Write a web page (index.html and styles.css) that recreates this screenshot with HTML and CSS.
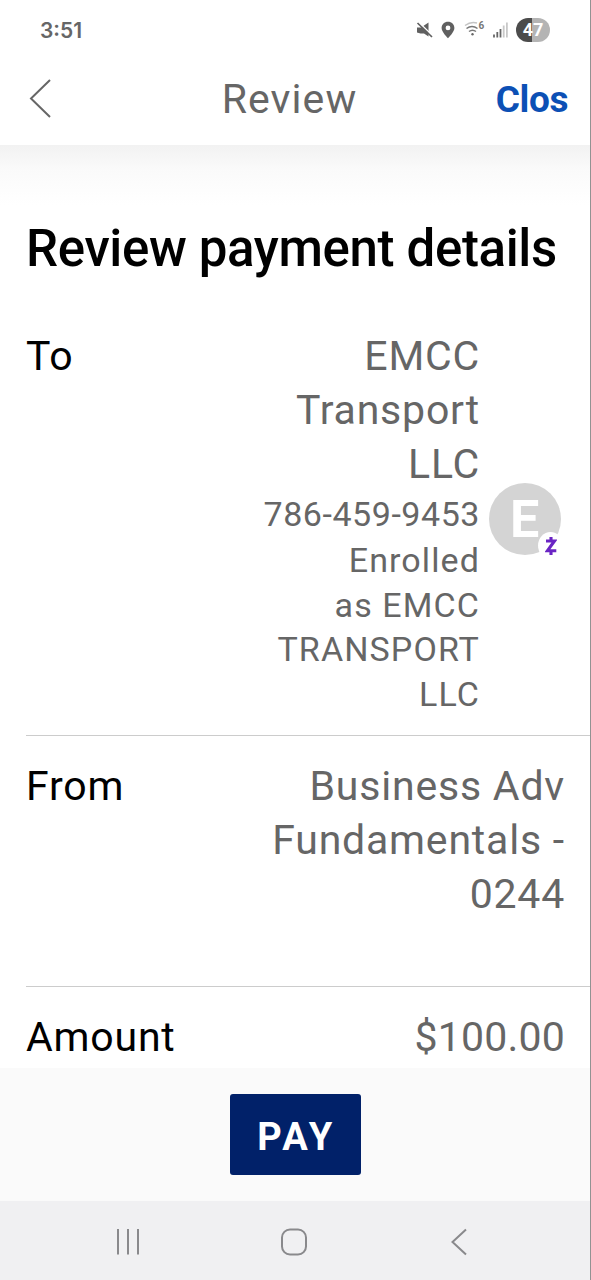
FILE: index.html
```html
<!DOCTYPE html>
<html lang="en">
<head>
    <meta charset="UTF-8">
    <meta name="viewport" content="width=device-width, initial-scale=1.0">
    <title>Review</title>
    <link rel="stylesheet" href="styles.css">
</head>
<body>
<div class="screen">

    <!-- Status bar -->
    <div class="status-bar">
        <span class="time">3:51</span>
        <div class="status-icons">
            <svg class="icon-mute" width="18" height="18" viewBox="0 0 18 18">
                <path d="M1 6.500h4L12.500 1.500v14L8 12.500H4.500L1 11.500z" fill="#606060"/>
                <path d="M2.500 1l15 14.500" stroke="#fff" stroke-width="1.500"/>
                <path d="M1.500 2l14.500 14" stroke="#606060" stroke-width="1.700"/>
            </svg>
            <svg class="icon-pin" width="14" height="18" viewBox="0 0 14 18">
                <path d="M7 .8C3.300.8.600 3.500.600 7c0 4.200 6.400 10.200 6.400 10.200S13.400 11.200 13.400 7C13.400 3.500 10.700.8 7 .8zm0 3.700a2.400 2.400 0 1 1 0 4.800 2.400 2.400 0 0 1 0-4.800z" fill="#606060" fill-rule="evenodd"/>
            </svg>
            <svg class="icon-wifi" width="21" height="16" viewBox="0 0 21 16">
                <g fill="none" stroke-width="1.500">
                    <path d="M1 4.500Q7 0 13 2" stroke="#c4c4c4"/>
                    <path d="M2.500 7.500Q8 3.300 13.500 7.500" stroke="#777"/>
                    <path d="M5 10.500Q8.500 7.800 12 10.500" stroke="#777"/>
                </g>
                <circle cx="8.500" cy="13.300" r="1.200" fill="#666"/>
                <text x="14.500" y="8" class="wifi-six">6</text>
            </svg>
            <svg class="icon-signal" width="15" height="16" viewBox="0 0 15 16">
                <path d="M1 12.500V15.500M4.300 10V15.500M7.500 7V15.500" stroke="#666" stroke-width="1.800"/>
                <path d="M10.700 3.500V15.500M13.900.500V15.500" stroke="#c8c8c8" stroke-width="1.800"/>
            </svg>
            <span class="battery">47</span>
        </div>
    </div>

    <!-- Header -->
    <header class="header">
        <svg class="back" width="24" height="42" viewBox="0 0 24 42">
            <path d="M21 2L2 20.500l19 18.500" fill="none" stroke="#666" stroke-width="2"/>
        </svg>
        <h1>Review</h1>
        <a class="close">Clos</a>
    </header>

    <!-- Payment details -->
    <main class="content">
        <h2>Review payment details</h2>

        <div class="row row-to">
            <span class="label">To</span>
            <div class="payee">
                <div class="value">EMCC<br>Transport<br>LLC</div>
                <div class="phone">786-459-9453</div>
                <div class="enrolled">Enrolled<br>as EMCC<br>TRANSPORT<br>LLC</div>
            </div>
            <div class="avatar">E
                <span class="zelle">
                    <svg width="12" height="20" viewBox="0 0 12 20">
                        <path d="M1 5h8.500L2.500 14.700h8.800M6 1v4M6 15v4" fill="none" stroke="#6a24c4" stroke-width="3.100"/>
                    </svg>
                </span>
            </div>
        </div>

        <div class="row row-from">
            <span class="label">From</span>
            <div class="value">Business Adv<br>Fundamentals -<br>0244</div>
        </div>

        <div class="row row-amount">
            <span class="label">Amount</span>
            <div class="value amount">$100.00</div>
        </div>
    </main>

    <!-- Pay button -->
    <div class="pay-bar">
        <button class="pay-button">PAY</button>
    </div>

    <!-- Navigation bar -->
    <nav class="nav-bar">
        <svg width="26" height="28" viewBox="0 0 26 28">
            <path d="M3 1v25.500M13 1v25.500M23 1v25.500" stroke="#89898c" stroke-width="2"/>
        </svg>
        <svg class="home" width="28" height="28" viewBox="0 0 28 28">
            <rect x="2" y="1.500" width="24" height="25" rx="8" fill="none" stroke="#89898c" stroke-width="2"/>
        </svg>
        <svg width="18" height="28" viewBox="0 0 18 28">
            <path d="M16 1.500L2.500 14 16 26.500" fill="none" stroke="#89898c" stroke-width="2"/>
        </svg>
    </nav>

</div>
</body>
</html>
```
FILE: styles.css
```css
* {
    box-sizing: border-box;
}

body {
    margin: 0;
    font-family: Roboto, "Liberation Sans", sans-serif;
    background: #fff;
    color: #000;
}

.screen {
    display: flex;
    flex-direction: column;
    width: 591px;
    height: 1280px;
    border-right: 1px solid #929292;
    overflow: hidden;
}

/* Status bar */
.status-bar {
    display: flex;
    justify-content: space-between;
    align-items: center;
    height: 60px;
    padding: 0 40px;
    flex: none;
}

.time {
    font-family: Inter, sans-serif;
    font-size: 21px;
    font-weight: 600;
    color: #666;
}

.status-icons {
    display: flex;
    align-items: center;
}

.icon-pin {
    margin-left: 7px;
}

.icon-wifi {
    margin: 0 0 3px 9px;
}

.icon-signal {
    margin-left: 8px;
}

.wifi-six {
    font: bold 10px Roboto, sans-serif;
    fill: #777;
}

.battery {
    width: 34px;
    height: 24px;
    margin-left: 8px;
    border-radius: 12px;
    background: linear-gradient(to right, #4c4c4c 47%, #b4b4b4 47%);
    color: #fff;
    font: 700 18px/24px Roboto, sans-serif;
    text-align: center;
}

/* Header */
.header {
    display: grid;
    grid-template-columns: 160px 1fr 178px;
    align-items: center;
    height: 85px;
    padding: 0 22px 8px 29px;
    flex: none;
}

.header h1 {
    margin: 0;
    font-size: 41px;
    font-weight: 400;
    letter-spacing: 1.100px;
    text-align: center;
    color: #666;
}

.close {
    justify-self: end;
    padding-top: 2px;
    font-size: 37px;
    font-weight: 700;
    letter-spacing: -.4px;
    color: #0c50b5;
}

/* Payment details */
.content {
    flex: 1;
    min-height: 0;
    padding-left: 26px;
    background: linear-gradient(#f2f2f2, #fafafa 24px, #fff 60px);
    overflow: hidden;
}

.content h2 {
    margin: 73px 0 49px;
    font-size: 51px;
    font-weight: 500;
    line-height: 62px;
    letter-spacing: -.35px;
    white-space: nowrap;
}

.row {
    display: flex;
    justify-content: space-between;
    padding-right: 25px;
    font-size: 41px;
    line-height: 54px;
    letter-spacing: .8px;
}

.value,
.payee {
    color: #666;
    text-align: right;
}

.row-to {
    height: 407px;
    padding-right: 29px;
    border-bottom: 1px solid #ccc;
}

.payee {
    margin-left: auto;
}

.phone,
.enrolled {
    font-size: 34px;
    line-height: 44.400px;
}

.phone {
    margin: 1px 0 2px;
    letter-spacing: .55px;
}

.enrolled {
    letter-spacing: 1.100px;
}

.avatar {
    position: relative;
    width: 72px;
    height: 72px;
    margin: 154px 0 0 9px;
    border-radius: 50%;
    background: #d4d4d4;
    color: #fff;
    font: bold 52px/73px Roboto, sans-serif;
    text-align: center;
}

.zelle {
    position: absolute;
    right: -2px;
    bottom: -4px;
    display: flex;
    align-items: center;
    justify-content: center;
    width: 25px;
    height: 27px;
    border-radius: 50%;
    background: #fff;
}

.row-from {
    height: 251px;
    padding-top: 23px;
    border-bottom: 1px solid #ccc;
}

.row-amount {
    padding-top: 23px;
}

.amount {
    letter-spacing: .2px;
}

/* Pay button */
.pay-bar {
    display: flex;
    justify-content: center;
    height: 133px;
    padding-top: 26px;
    background: #fafafa;
    flex: none;
}

.pay-button {
    width: 131px;
    height: 81px;
    padding: 4px 0 0 3px;
    border: none;
    border-radius: 3px;
    background: #012169;
    color: #fff;
    font: 700 38px Roboto, sans-serif;
    letter-spacing: 3.500px;
}

/* Navigation bar */
.nav-bar {
    display: flex;
    justify-content: space-between;
    align-items: center;
    height: 79px;
    padding: 3px 122px 0 115px;
    background: #f0f0f2;
    flex: none;
}

.home {
    margin-right: 4px;
}
```
